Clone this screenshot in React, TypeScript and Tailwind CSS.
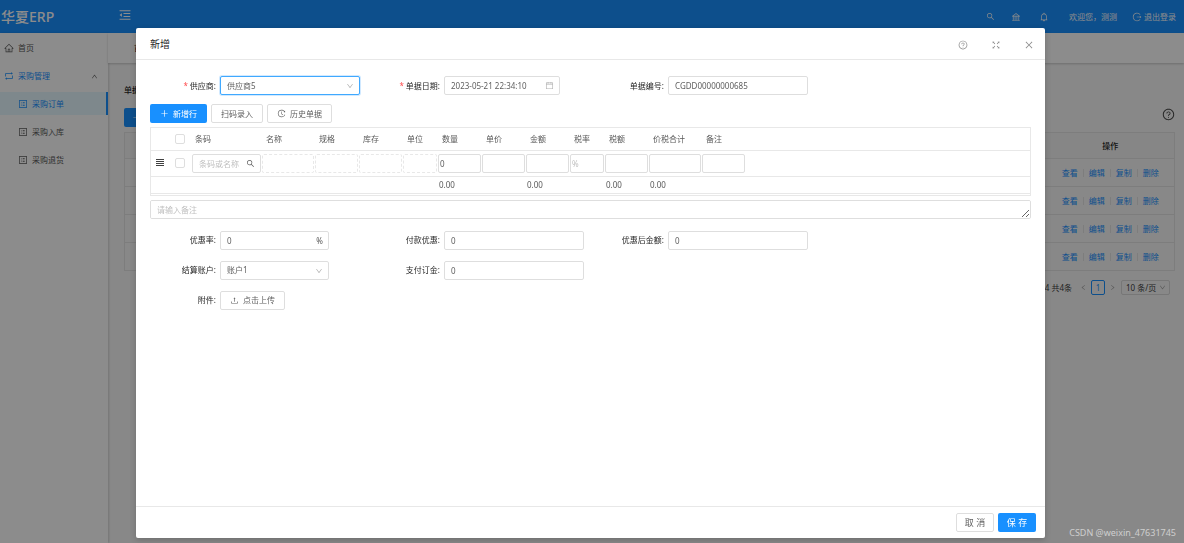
import {
  AiOutlineBank,
  AiOutlineBell,
  AiOutlineCalendar,
  AiOutlineClose,
  AiOutlineDown,
  AiOutlineFullscreen,
  AiOutlineHistory,
  AiOutlineHome,
  AiOutlineLeft,
  AiOutlineLogout,
  AiOutlineMenuFold,
  AiOutlinePlus,
  AiOutlineProfile,
  AiOutlineQuestionCircle,
  AiOutlineRetweet,
  AiOutlineRight,
  AiOutlineSearch,
  AiOutlineUp,
  AiOutlineUpload,
} from 'react-icons/ai';
import clsx from 'clsx';
import type { ReactNode } from 'react';

const subMenus = [
  { label: '采购订单', active: true },
  { label: '采购入库', active: false },
  { label: '采购退货', active: false },
];

const orderActions = ['查看', '编辑', '复制', '删除'];

const boxBase =
  'h-[19px] rounded-xs border bg-white text-[#606060] placeholder:text-[#bfbfbf] focus:outline-none';
const inputBox = clsx(boxBase, 'border-[#dedede]');

function Header() {
  return (
    <header className="flex h-[33px] shrink-0 items-center bg-[#1890ff] text-white">
      <h1 className="w-[108px] pl-px text-[14px] leading-none font-medium">华夏ERP</h1>
      <button type="button" aria-label="收起菜单" className="-mt-1 ml-[10px]">
        <AiOutlineMenuFold size={14} />
      </button>
      <div className="ml-auto flex items-center pr-2">
        <button type="button" aria-label="搜索">
          <AiOutlineSearch size={9} />
        </button>
        <button type="button" aria-label="首页" className="ml-4">
          <AiOutlineBank size={10} />
        </button>
        <button type="button" aria-label="通知" className="ml-[18px]">
          <AiOutlineBell size={10} />
        </button>
        <span className="ml-5">欢迎您，测测</span>
        <a href="#logout" className="ml-[15px] flex items-center gap-0.5">
          <AiOutlineLogout size={10} />
          退出登录
        </a>
      </div>
    </header>
  );
}

function Sidebar() {
  return (
    <nav className="w-[108px] shrink-0 bg-white text-[#595959] shadow-[1px_0_2px_rgba(0,0,0,0.15)]">
      <a href="#home" className="flex h-[29px] items-center gap-1 pl-1">
        <AiOutlineHome size={10} />
        首页
      </a>
      <button type="button" className="flex h-[28px] w-full items-center gap-1 pr-[10px] pl-1 text-[#1890ff]">
        <AiOutlineRetweet size={10} />
        采购管理
        <AiOutlineUp size={7} className="ml-auto text-[#595959]" />
      </button>
      <ul className="flex flex-col gap-[5px] pt-[2px]">
        {subMenus.map((item) => (
          <li key={item.label}>
            <a
              href="#purchase"
              className={clsx(
                'flex h-[23px] items-center gap-1 pl-[18px]',
                item.active && 'border-r-2 border-[#1890ff] bg-[#e6f7ff] text-[#1890ff]',
              )}
            >
              <AiOutlineProfile size={10} />
              {item.label}
            </a>
          </li>
        ))}
      </ul>
    </nav>
  );
}

function OrderList() {
  return (
    <main className="flex min-w-0 flex-1 flex-col">
      <div className="flex h-[30px] shrink-0 items-center bg-white pl-[26px] shadow-[0_1px_2px_rgba(0,0,0,0.2)]">首页</div>
      <div className="mt-[2px] ml-[2px] flex-1 pr-[9px] pl-[14px]">
        <div className="flex h-[43px] items-end">
          <span className="pb-3 font-medium text-[#262626]">单据编号</span>
        </div>
        <div className="flex h-[24px] items-start justify-between">
          <button type="button" className="flex h-[19px] items-center gap-1 rounded-xs bg-[#1890ff] px-2 text-white">
            <AiOutlinePlus size={9} />
            新增
          </button>
          <button type="button" aria-label="帮助" className="text-[#404040]">
            <AiOutlineQuestionCircle size={13} />
          </button>
        </div>
        <table className="w-full border border-[#e4e4e4]">
          <thead>
            <tr className="h-[26px] bg-[#f4f4f4]">
              <th />
              <th className="w-[128px] text-center font-medium text-[#262626]">操作</th>
            </tr>
          </thead>
          <tbody>
            {[1, 2, 3, 4].map((row) => (
              <tr key={row} className="h-[28px] border-t border-[#e4e4e4]">
                <td />
                <td>
                  <div className="flex items-center justify-center divide-x divide-[#e4e4e4]">
                    {orderActions.map((action) => (
                      <a key={action} href="#order" className="px-[5px] leading-[8px] text-[#1890ff]">
                        {action}
                      </a>
                    ))}
                  </div>
                </td>
              </tr>
            ))}
          </tbody>
        </table>
        <div className="flex items-center justify-end pt-[9px] pr-[5px] text-[#404040]">
          <span>1-4 共4条</span>
          <button type="button" aria-label="上一页" className="ml-2 text-[#999]">
            <AiOutlineLeft size={7} />
          </button>
          <button type="button" className="mx-1 h-[15px] w-[14px] rounded-xs border border-[#1890ff] text-[#1890ff]">
            1
          </button>
          <button type="button" aria-label="下一页" className="text-[#999]">
            <AiOutlineRight size={7} />
          </button>
          <div className="relative ml-[5px]">
            <select
              aria-label="每页条数"
              className="h-[15px] w-[49px] appearance-none rounded-xs border border-[#d9d9d9] pl-[4px]"
            >
              <option>10 条/页</option>
            </select>
            <AiOutlineDown size={7} className="pointer-events-none absolute top-1 right-1 text-[#999]" />
          </div>
        </div>
      </div>
    </main>
  );
}

interface FieldProps {
  id: string;
  label: string;
  required?: boolean;
  children: ReactNode;
}

function Field({ id, label, required, children }: FieldProps) {
  return (
    <div className="flex h-[19px] items-center">
      <label htmlFor={id} className="w-[70px] shrink-0 pr-1 text-right text-[#262626]">
        {required && <span className="mr-0.5 text-[#ff4d4f]">*</span>}
        {label}:
      </label>
      {children}
    </div>
  );
}

interface SelectBoxProps {
  id: string;
  value: string;
  focused?: boolean;
  className: string;
}

function SelectBox({ id, value, focused, className }: SelectBoxProps) {
  return (
    <div className={clsx('relative', className)}>
      <select
        id={id}
        className={clsx(
          boxBase,
          'block w-full appearance-none px-[6px]',
          focused ? 'border-[#40a9ff] shadow-[0_0_0_1px_rgba(24,144,255,0.2)]' : 'border-[#dedede]',
        )}
      >
        <option>{value}</option>
      </select>
      <AiOutlineDown size={8} className="pointer-events-none absolute top-[6px] right-[6px] text-[#b0b0b0]" />
    </div>
  );
}

const columns = [
  { title: '名称', width: 'w-[53px]', disabled: true },
  { title: '规格', width: 'w-[44px]', disabled: true },
  { title: '库存', width: 'w-[44px]', disabled: true },
  { title: '单位', width: 'w-[35px]', disabled: true },
  { title: '数量', width: 'w-[44px]', value: '0', total: '0.00' },
  { title: '单价', width: 'w-[44px]' },
  { title: '金额', width: 'w-[44px]', total: '0.00' },
  { title: '税率', width: 'w-[35px]', placeholder: '%' },
  { title: '税额', width: 'w-[44px]', total: '0.00' },
  { title: '价税合计', width: 'w-[53px]', total: '0.00' },
  { title: '备注', width: 'w-[44px]' },
];

const checkBox = 'block size-[10px] appearance-none rounded-xs border border-[#dedede] bg-white';

function DetailTable() {
  return (
    <div className="mt-1 border border-[#e8e8e8] pb-px">
      <table className="w-full table-fixed border-b border-[#e8e8e8] text-[#595959]">
        <thead>
          <tr className="h-[22px]">
            <th className="w-[24px]" />
            <th className="w-[16px]">
              <input type="checkbox" aria-label="全选" className={checkBox} />
            </th>
            <th className="w-[70px] pl-1 text-left font-normal">条码</th>
            {columns.map((col) => (
              <th key={col.title} className={clsx(col.width, 'pl-[5px] text-left font-normal whitespace-nowrap')}>
                {col.title}
              </th>
            ))}
            <th />
          </tr>
        </thead>
        <tbody>
          <tr className="h-[26px] border-t border-[#e8e8e8]">
            <td className="pl-1">
              <svg viewBox="0 0 10 10" className="size-[10px]" stroke="#404040" strokeWidth="1">
                <path d="M1 1.5h8M1 3.5h8M1 5.5h8M1 7.5h8" />
              </svg>
            </td>
            <td>
              <input type="checkbox" aria-label="选择行" className={checkBox} />
            </td>
            <td className="pl-px">
              <div className="relative w-[69px]">
                <input aria-label="条码" placeholder="条码或名称" className={clsx(inputBox, 'block w-full pl-[6px]')} />
                <AiOutlineSearch size={9} className="absolute top-[5px] right-[6px]" />
              </div>
            </td>
            {columns.map((col) => (
              <td key={col.title} className="pl-px">
                <input
                  aria-label={col.title}
                  defaultValue={col.value}
                  placeholder={col.placeholder}
                  disabled={col.disabled}
                  className={clsx(
                    boxBase,
                    'block w-full px-px',
                    col.disabled ? 'border-dashed border-[#e8e8e8]' : 'border-[#dedede]',
                  )}
                />
              </td>
            ))}
            <td />
          </tr>
          <tr className="h-[17px] border-t border-[#e8e8e8]">
            <td colSpan={3} />
            {columns.map((col) => (
              <td key={col.title} className="pl-[2px]">
                {col.total}
              </td>
            ))}
            <td />
          </tr>
        </tbody>
      </table>
    </div>
  );
}

function OrderModal() {
  return (
    <div
      role="dialog"
      aria-label="新增"
      className="mx-auto mt-[28px] mb-[5px] flex w-full max-w-[909px] flex-col rounded-xs bg-white shadow-[0_2px_6px_rgba(0,0,0,0.2)]"
    >
      <div className="flex h-[32px] shrink-0 items-center border-b border-[#e8e8e8] pr-[11px] pl-[14px]">
        <h2 className="flex-1 text-[10px] text-[#262626]">新增</h2>
        <div className="flex items-center gap-[23px] pt-0.5 text-[#8c8c8c]">
          <button type="button" aria-label="帮助">
            <AiOutlineQuestionCircle size={10} />
          </button>
          <button type="button" aria-label="全屏">
            <AiOutlineFullscreen size={10} />
          </button>
          <button type="button" aria-label="关闭">
            <AiOutlineClose size={10} />
          </button>
        </div>
      </div>

      <form className="flex-1 px-[14px] pt-4">
        <div className="grid grid-cols-[224px_224px_1fr]">
          <Field id="supplier" label="供应商" required>
            <SelectBox id="supplier" value="供应商5" focused className="w-[140px]" />
          </Field>
          <Field id="date" label="单据日期" required>
            <div className="relative w-[116px]">
              <input id="date" defaultValue="2023-05-21 22:34:10" className={clsx(inputBox, 'block w-full px-[6px]')} />
              <AiOutlineCalendar size={9} className="absolute top-[5px] right-[6px] text-[#b0b0b0]" />
            </div>
          </Field>
          <Field id="number" label="单据编号">
            <input id="number" defaultValue="CGDD00000000685" className={clsx(inputBox, 'w-[140px] px-[6px]')} />
          </Field>
        </div>

        {/* Detail row actions */}
        <div className="mt-[9px] flex gap-1">
          <button type="button" className="flex h-[19px] items-center gap-1 rounded-xs bg-[#1890ff] px-[10px] text-white">
            <AiOutlinePlus size={9} />
            新增行
          </button>
          <button type="button" className={clsx(inputBox, 'px-[9px]')}>
            扫码录入
          </button>
          <button type="button" className={clsx(inputBox, 'flex items-center gap-1 px-[9px]')}>
            <AiOutlineHistory size={9} />
            历史单据
          </button>
        </div>

        <DetailTable />

        <textarea
          aria-label="备注"
          placeholder="请输入备注"
          className={clsx(inputBox, 'mt-1 block w-full resize px-[6px] py-[3px]')}
        />

        <div className="mt-3 grid grid-cols-[224px_224px_1fr] gap-y-[11px]">
          <Field id="discount" label="优惠率">
            <div className="relative w-[109px]">
              <input id="discount" defaultValue="0" className={clsx(inputBox, 'block w-full px-[6px]')} />
              <span className="absolute top-[4px] right-[6px] text-[#595959]">%</span>
            </div>
          </Field>
          <Field id="payDiscount" label="付款优惠">
            <input id="payDiscount" defaultValue="0" className={clsx(inputBox, 'w-[140px] px-[6px]')} />
          </Field>
          <Field id="discounted" label="优惠后金额">
            <input id="discounted" defaultValue="0" className={clsx(inputBox, 'w-[140px] px-[6px]')} />
          </Field>
          <Field id="account" label="结算账户">
            <SelectBox id="account" value="账户1" className="w-[109px]" />
          </Field>
          <Field id="deposit" label="支付订金">
            <input id="deposit" defaultValue="0" className={clsx(inputBox, 'w-[140px] px-[6px]')} />
          </Field>
          <span />
          <Field id="attachment" label="附件">
            <button id="attachment" type="button" className={clsx(inputBox, 'flex items-center gap-1 px-[9px]')}>
              <AiOutlineUpload size={9} />
              点击上传
            </button>
          </Field>
        </div>
      </form>

      <div className="flex h-[32px] shrink-0 items-center justify-end gap-1 border-t border-[#e8e8e8] pr-[9px] text-[9px]">
        <button type="button" className={clsx(inputBox, 'w-[38px]')}>
          取 消
        </button>
        <button type="button" className="h-[19px] w-[38px] rounded-xs bg-[#1890ff] text-white">
          保 存
        </button>
      </div>
    </div>
  );
}

export default function App() {
  return (
    <div className="relative flex min-h-screen flex-col bg-[#f8f8f8] font-['Noto_Sans','Noto_Sans_CJK_SC',sans-serif] text-[8px] leading-[12px]">
      <Header />
      <div className="flex flex-1">
        <Sidebar />
        <OrderList />
      </div>

      {/* Mask and modal */}
      <div className="absolute inset-0 flex bg-black/45 pr-[23px] pl-5">
        <OrderModal />
      </div>
      <span className="absolute right-2 bottom-1 text-[9px] text-white/60">CSDN @weixin_47631745</span>
    </div>
  );
}
